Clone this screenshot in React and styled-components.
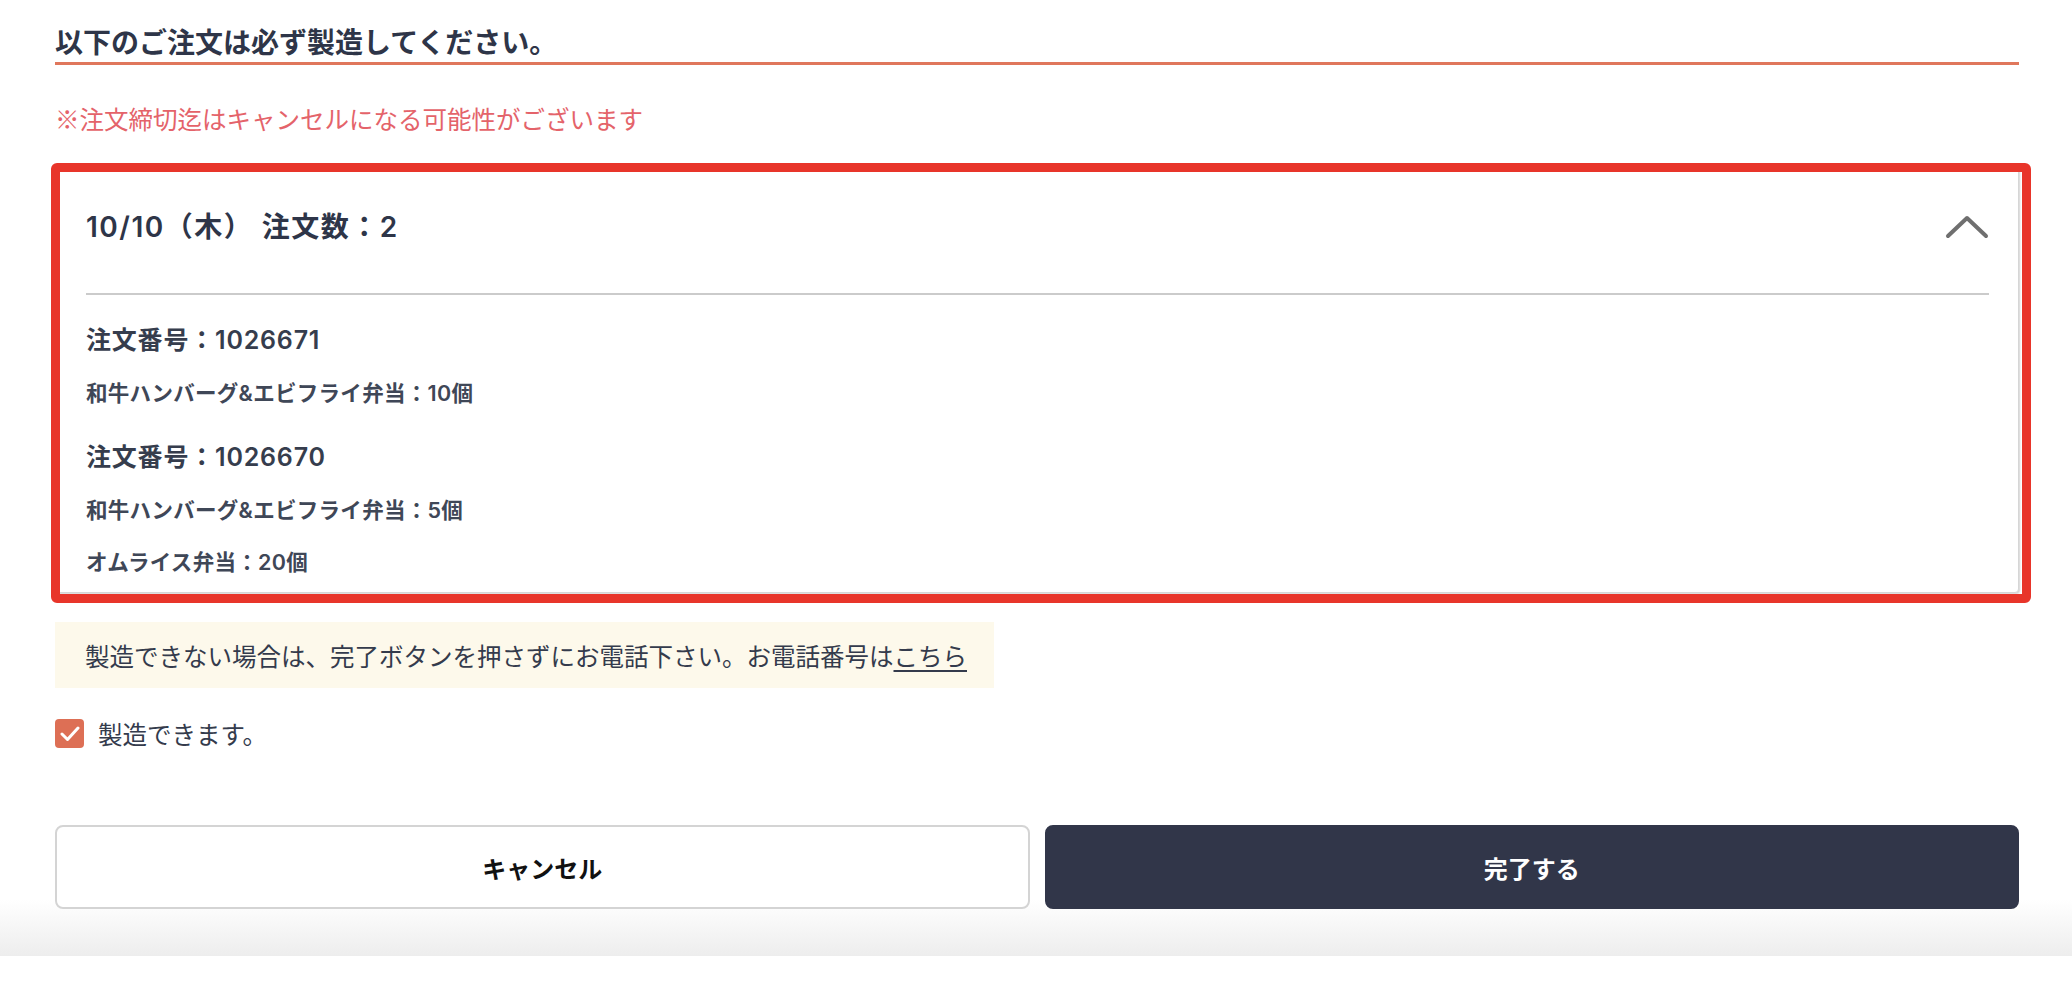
import React from "react";
import styled, { createGlobalStyle } from "styled-components";

const GlobalStyle = createGlobalStyle`
  html, body {
    margin: 0;
    padding: 0;
    background: #ffffff;
  }
  body {
    font-family: Inter, "Noto Sans CJK JP", "Noto Sans", sans-serif;
    color: #2e3548;
  }
  * {
    box-sizing: border-box;
  }
`;

const Page = styled.div`
  padding: 21px 53px 0 55px;
`;

const Heading = styled.h2`
  margin: 0;
  font-family: "Noto Sans CJK JP", sans-serif;
  font-size: 28px;
  line-height: 40px;
  font-weight: 700;
  color: #2e3548;
  padding-bottom: 1px;
  border-bottom: 3px solid #e0775c;
`;

const Notice = styled.p`
  margin: 36px 0 0;
  font-family: "Noto Sans CJK JP", sans-serif;
  font-size: 24.5px;
  line-height: 36px;
  color: #e4636a;
`;

const CardWrap = styled.div`
  position: relative;
  margin-top: 30px;
`;

const Highlight = styled.div`
  position: absolute;
  top: -4px;
  left: -4px;
  right: -12px;
  bottom: -10px;
  border: 9px solid #e8352a;
  border-radius: 6px;
  pointer-events: none;
`;

const Card = styled.section`
  background: #ffffff;
  border: 1px solid #d6d6d6;
  border-radius: 4px;
  box-shadow: 1px 1px 2px rgba(0, 0, 0, 0.18);
  padding: 0 29px 14px 30px;
`;

const CardHeader = styled.div`
  display: flex;
  align-items: center;
  justify-content: space-between;
  padding: 39px 0 46px;
  border-bottom: 2px solid #cbcbcb;
`;

const CardTitle = styled.h3`
  margin: 0;
  font-size: 28px;
  line-height: 40px;
  font-weight: 600;
  letter-spacing: 1.5px;
  color: #2e3548;
`;

const Chevron = styled.svg`
  width: 44px;
  height: 26px;
  flex-shrink: 0;
`;

const CardBody = styled.div`
  display: flex;
  flex-direction: column;
  gap: 30px;
  padding-top: 27px;
`;

const Order = styled.div`
  display: flex;
  flex-direction: column;
`;

const OrderNo = styled.h4`
  margin: 0 0 19px;
  font-size: 25px;
  line-height: 36px;
  font-weight: 600;
  letter-spacing: 0.8px;
  color: #363d4d;
`;

const Items = styled.ul`
  list-style: none;
  margin: 0;
  padding: 0;
  display: flex;
  flex-direction: column;
  gap: 20px;
`;

const Item = styled.li`
  font-size: 21.5px;
  line-height: 32px;
  font-weight: 600;
  letter-spacing: 0.3px;
  color: #3f4757;
`;

const InfoBox = styled.div`
  margin-top: 29px;
  width: 939px;
  height: 66px;
  display: flex;
  align-items: center;
  padding-left: 30px;
  background: #fdf9eb;
  font-size: 24.5px;
  color: #343b4c;
`;

const Link = styled.a`
  color: inherit;
  text-decoration: underline;
  text-underline-offset: 4px;
`;

const CheckRow = styled.label`
  margin-top: 28px;
  display: flex;
  align-items: center;
  gap: 14px;
  font-size: 24.5px;
  color: #343b4c;
`;

const CheckBox = styled.span`
  width: 29px;
  height: 29px;
  border-radius: 4px;
  background: #dd6f55;
  display: flex;
  align-items: center;
  justify-content: center;
`;

const Footer = styled.footer`
  margin: 74px -53px 0 -55px;
  padding: 0 53px 47px 55px;
  background: linear-gradient(180deg, #ffffff 0, #ffffff 75px, #ededed 100%);
  display: grid;
  grid-template-columns: 1fr 1fr;
  gap: 15px;
`;

const Button = styled.button`
  height: 84px;
  border-radius: 8px;
  font-family: inherit;
  font-size: 24px;
  font-weight: 700;
  cursor: pointer;
  border: 2px solid ${(p) => (p.$primary ? "#313649" : "#d4d4d4")};
  background: ${(p) => (p.$primary ? "#313649" : "#ffffff")};
  color: ${(p) => (p.$primary ? "#ffffff" : "#111111")};
`;

const orders = [
  { no: "1026671", items: ["和牛ハンバーグ&エビフライ弁当：10個"] },
  {
    no: "1026670",
    items: ["和牛ハンバーグ&エビフライ弁当：5個", "オムライス弁当：20個"],
  },
];

export default function App() {
  return (
    <>
      <GlobalStyle />
      <Page>
        <Heading>以下のご注文は必ず製造してください。</Heading>
        <Notice>※注文締切迄はキャンセルになる可能性がございます</Notice>

        <CardWrap>
          <Card>
            <CardHeader>
              <CardTitle>10/10（木） 注文数：2</CardTitle>
              <Chevron viewBox="0 0 44 26">
                <polyline
                  points="3,22 22,4 41,22"
                  fill="none"
                  stroke="#6f6f6f"
                  strokeWidth="4"
                  strokeLinecap="round"
                  strokeLinejoin="round"
                />
              </Chevron>
            </CardHeader>
            <CardBody>
              {orders.map((o) => (
                <Order key={o.no}>
                  <OrderNo>注文番号：{o.no}</OrderNo>
                  <Items>
                    {o.items.map((it) => (
                      <Item key={it}>{it}</Item>
                    ))}
                  </Items>
                </Order>
              ))}
            </CardBody>
          </Card>
          <Highlight />
        </CardWrap>

        <InfoBox>
          製造できない場合は、完了ボタンを押さずにお電話下さい。お電話番号は
          <Link href="#">こちら</Link>
        </InfoBox>

        <CheckRow>
          <CheckBox>
            <svg width="20" height="16" viewBox="0 0 20 16">
              <polyline
                points="2,8 7.5,13.5 18,2"
                fill="none"
                stroke="#ffffff"
                strokeWidth="3"
                strokeLinecap="round"
                strokeLinejoin="round"
              />
            </svg>
          </CheckBox>
          製造できます。
        </CheckRow>

        <Footer>
          <Button>キャンセル</Button>
          <Button $primary>完了する</Button>
        </Footer>
      </Page>
    </>
  );
}
